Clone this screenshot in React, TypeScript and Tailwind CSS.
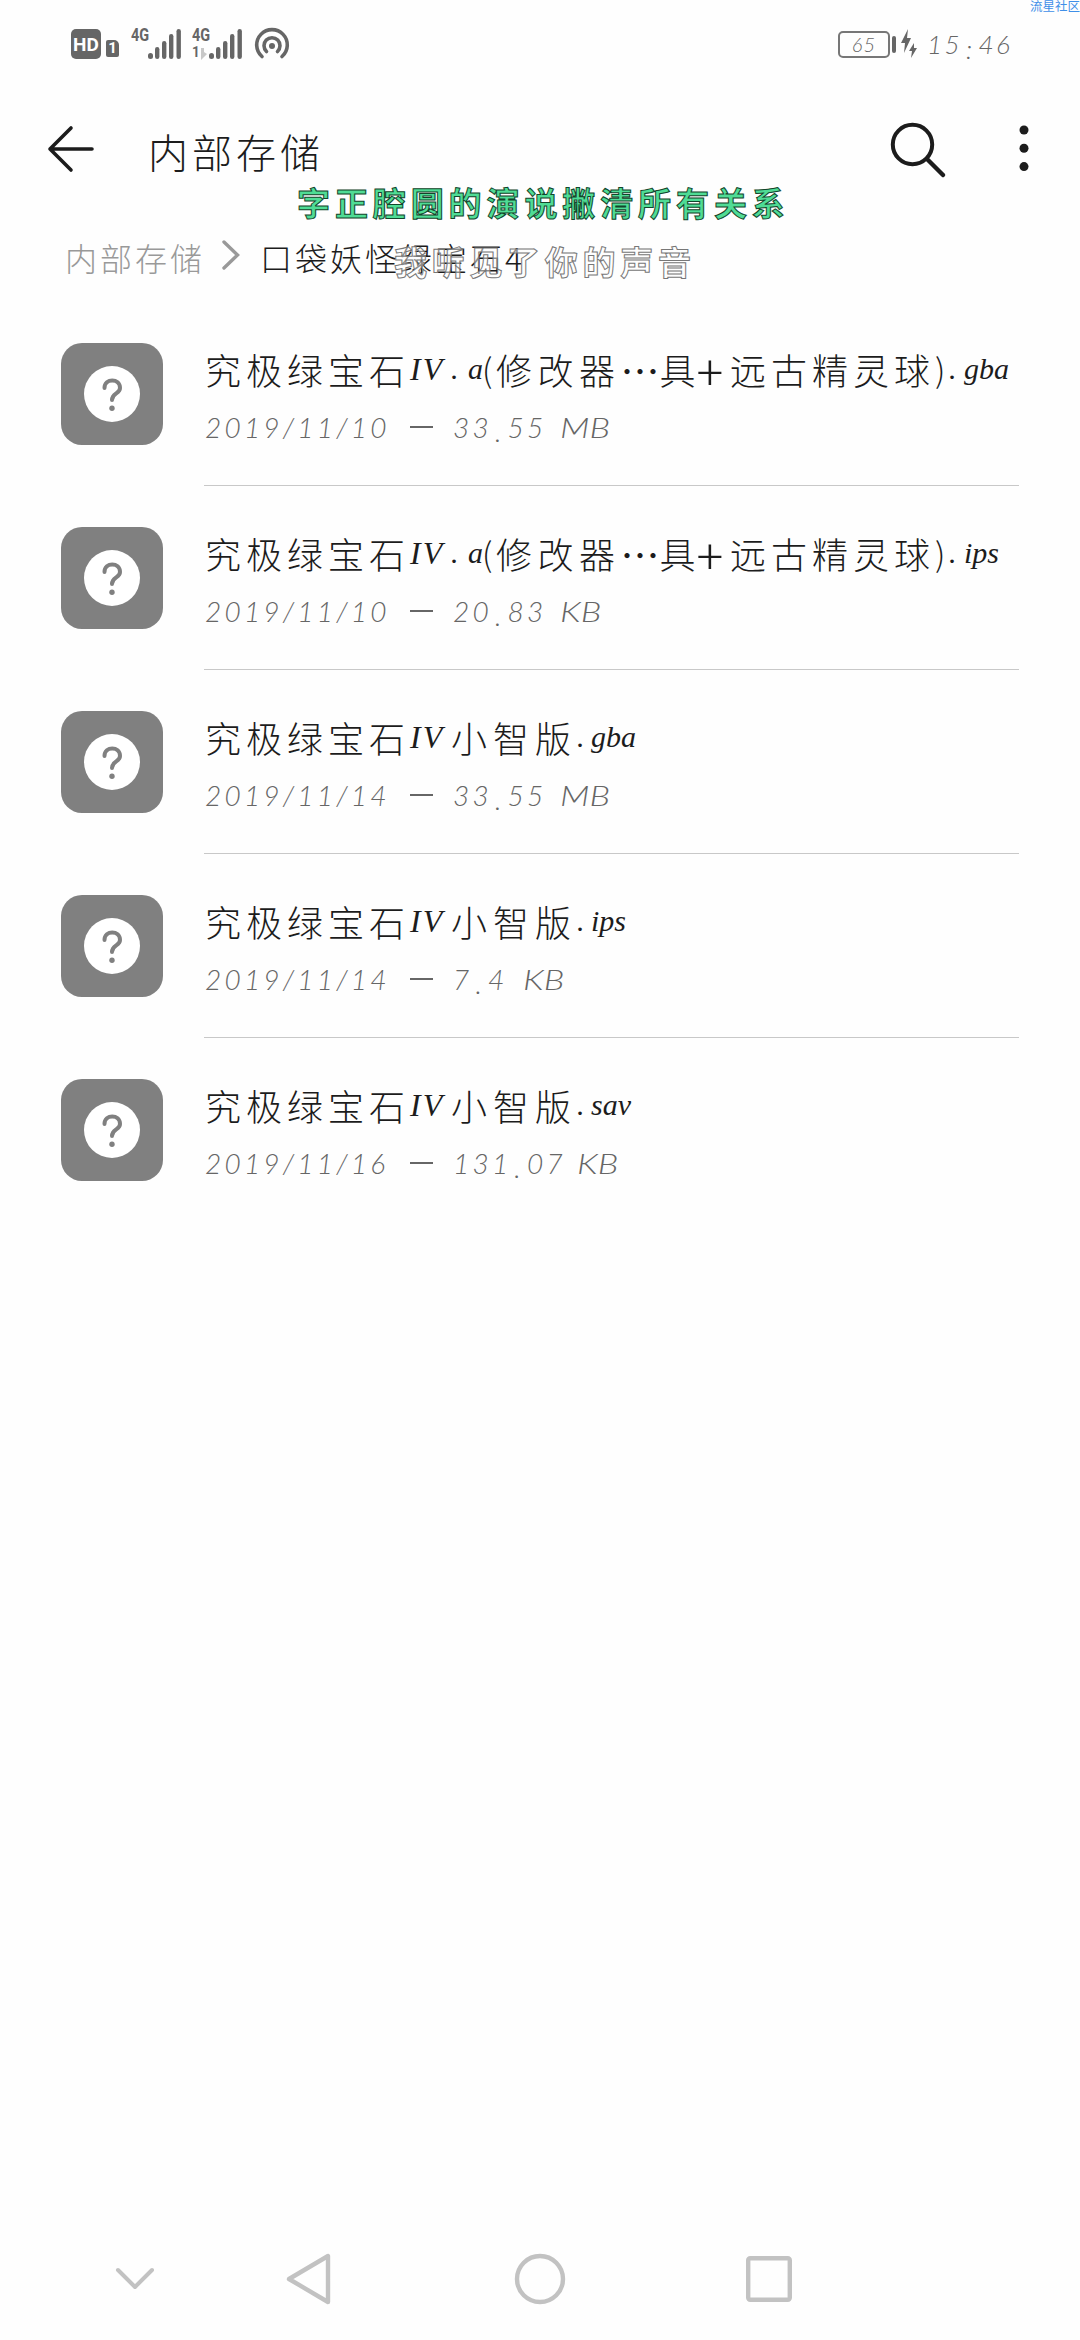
import React from "react";

type Part = { t: string; w: number; k: "cjk" | "latin" | "paren" | "iv" | "dots" | "plus" };

const kinds = {
  cjk: "font-['Noto_Sans_CJK_SC',sans-serif] font-light text-[36px]",
  latin: "font-['Liberation_Serif','Noto_Sans_CJK_SC',serif] italic text-[30px]",
  paren: "font-['Noto_Sans_CJK_SC',sans-serif] font-light text-[33px]",
  iv: "font-['Liberation_Serif','Noto_Sans_CJK_SC',serif] italic text-[32px] tracking-[2px]",
  dots: "font-['Noto_Sans_CJK_SC',sans-serif] text-[39px]",
  plus: "font-['Noto_Sans_CJK_SC',sans-serif] font-light text-[50px]",
};

const head: Part[] = [
  { t: "究极绿宝石", w: 205, k: "cjk" },
  { t: "IV", w: 41, k: "iv" },
];
const long: Part[] = [
  ...head,
  { t: ".", w: 17, k: "latin" },
  { t: "a", w: 14, k: "latin" },
  { t: "(", w: 14, k: "paren" },
  { t: "修改器", w: 124.5, k: "cjk" },
  { t: "…", w: 39, k: "dots" },
  { t: "具", w: 37, k: "cjk" },
  { t: "+", w: 33.5, k: "plus" },
  { t: "远古精灵球", w: 205, k: "cjk" },
  { t: ")", w: 14, k: "paren" },
  { t: ".", w: 15, k: "latin" },
];
const short: Part[] = [
  ...head,
  { t: "小智版", w: 126, k: "cjk" },
  { t: ".", w: 14, k: "latin" },
];

const files = [
  { parts: long, ext: "gba", date: "2019/11/10", size: "33.55", sizeW: 107, unit: "MB" },
  { parts: long, ext: "ips", date: "2019/11/10", size: "20.83", sizeW: 107, unit: "KB" },
  { parts: short, ext: "gba", date: "2019/11/14", size: "33.55", sizeW: 107, unit: "MB" },
  { parts: short, ext: "ips", date: "2019/11/14", size: "7.4", sizeW: 70, unit: "KB" },
  { parts: short, ext: "sav", date: "2019/11/16", size: "131.07", sizeW: 124, unit: "KB" },
];

function Signal() {
  return (
    <>
      <rect x="0" y="25" width="5" height="6" rx="2.5" />
      <rect x="7" y="19" width="4.4" height="12" rx="2.2" />
      <rect x="14" y="13" width="4.4" height="18" rx="2.2" />
      <rect x="21" y="6" width="4.4" height="25" rx="2.2" />
      <rect x="28.5" y="1" width="4.4" height="30" rx="2.2" />
    </>
  );
}

function StatusBar() {
  return (
    <div className="flex h-[88px] items-center pl-[71px] pr-[70px] text-[#666]">
      <div className="flex h-[30px] w-[30px] items-center justify-center rounded-[5px] bg-[#666] font-['Roboto',sans-serif] text-[19px] font-bold leading-none text-white">HD</div>
      <div className="ml-[5px] mt-[9px] flex h-[17px] w-[13px] items-center justify-center rounded-[2px] rounded-tr-[5px] bg-[#666] font-['Roboto',sans-serif] text-[15px] font-bold leading-none text-white">1</div>
      <div className="relative ml-[12px] h-[34px] w-[50px]">
        <span className="absolute -top-[2px] left-0 origin-left scale-x-[0.76] font-['Roboto',sans-serif] text-[19px] font-bold leading-none">4G</span>
        <svg className="absolute left-[17px] top-[1px]" width="34" height="32" fill="currentColor"><Signal /></svg>
      </div>
      <div className="relative ml-[11px] h-[34px] w-[50px]">
        <span className="absolute -top-[2px] left-0 origin-left scale-x-[0.76] font-['Roboto',sans-serif] text-[19px] font-bold leading-none">4G</span>
        <span className="absolute left-0 top-[18px] origin-left scale-x-90 font-['Roboto',sans-serif] text-[15px] font-bold leading-none">1</span>
        <svg className="absolute left-[9px] top-[21px]" width="7" height="12"><path d="M0 0V12L3 9V0ZM3 4L6 6L3 9Z" fill="#c8c8c8" /></svg>
        <svg className="absolute left-[17px] top-[1px]" width="34" height="32" fill="currentColor"><Signal /></svg>
      </div>
      <svg className="ml-[12px]" width="36" height="34" viewBox="0 0 36 34" fill="none" stroke="currentColor" strokeWidth="3.6" strokeLinecap="round">
        <circle cx="18" cy="19" r="3" fill="currentColor" stroke="none" />
        <path d="M12.5 24.5A8 8 0 1 1 23.5 24.5" />
        <path d="M8 29.5A15.3 15.3 0 1 1 28 29.5" />
      </svg>
      <div className="ml-auto flex items-center">
        <div className="flex h-[27px] w-[52px] items-center justify-center rounded-[5px] border-2 border-[#777] font-['Lato',sans-serif] text-[20px] font-light italic leading-none tracking-[1px]">65</div>
        <div className="ml-[2px] h-[17px] w-[4px] rounded-[2px] bg-[#666]" />
        <svg className="ml-[4px]" width="19" height="30" fill="currentColor">
          <path d="M8 0L1 14H5L4 24L11 9H7ZM14 14L9 22H12L11 29L17 19H14Z" />
        </svg>
        <div className="ml-[8px] w-[83px] whitespace-nowrap font-['Lato',sans-serif] text-[26px] font-light italic leading-none tracking-[2.4px]">
          15<span className="relative top-[5px] mx-[4px]">:</span>46
        </div>
      </div>
    </div>
  );
}

function FileRow({ f, last }: { f: (typeof files)[number]; last: boolean }) {
  return (
    <div className="flex h-[184px] pl-[61px]">
      <div className="mt-[41px] flex h-[102px] w-[102px] items-center justify-center rounded-[21px] bg-[#808080]">
        <svg width="56" height="56" viewBox="0 0 56 56" fill="none">
          <circle cx="28" cy="28" r="28" fill="#fff" />
          <path d="M20.5 22C20.5 12 36 12 36 22C36 28 28 27 28 34" stroke="#808080" strokeWidth="4" strokeLinecap="round" />
          <circle cx="28" cy="42.2" r="2.7" fill="#808080" />
        </svg>
      </div>
      <div className={`ml-[41px] flex w-[815px] flex-col border-b-[1.5px] pt-[40px] ${last ? "border-transparent" : "border-[#c8c8c8]"}`}>
        <div className="flex h-[54px] items-center whitespace-nowrap pl-[1px] leading-none text-[#1c1c1c]">
          {f.parts.map((p, i) => (
            <span
              key={i}
              className={`shrink-0 leading-none ${kinds[p.k]}`}
              style={{ width: p.w, letterSpacing: p.k === "cjk" && p.t.length > 1 ? p.w / p.t.length - 36 : undefined }}
            >
              {p.t}
            </span>
          ))}
          <span className="font-['Liberation_Serif',serif] text-[30px] italic leading-none">{f.ext}</span>
        </div>
        <div className="mt-[14px] flex h-[34px] items-center whitespace-nowrap pl-[1px] font-['Lato',sans-serif] text-[28px] font-light italic leading-none tracking-[3.2px] text-[#666]">
          <span className="w-[205px]">{f.date}</span>
          <span className="mr-[20px] h-[2px] w-[23px] bg-[#666]" />
          <span className="shrink-0" style={{ width: f.sizeW }}>
            {f.size.split(".")[0]}
            <span className="relative top-[4px] mx-[3px]">.</span>
            {f.size.split(".")[1]}
          </span>
          <span className="origin-left scale-x-[1.25] tracking-normal">{f.unit}</span>
        </div>
      </div>
    </div>
  );
}

export default function App() {
  return (
    <div className="relative flex h-[2340px] w-[1080px] flex-col overflow-hidden bg-[#fefefe]">
      <StatusBar />
      <div className="flex h-[124px] pl-[47px]">
        <svg className="mt-[36px]" width="48" height="50" fill="none" stroke="#1c1c1c" strokeWidth="3.6" strokeLinecap="round" strokeLinejoin="round">
          <path d="M45 25H3M24 4L3 25L24 46" />
        </svg>
        <h1 className="ml-[53px] mt-[43px] font-['Noto_Sans_CJK_SC',sans-serif] text-[40px] font-light leading-none tracking-[4px] text-[#1c1c1c]">内部存储</h1>
        <svg className="ml-auto mr-[72px] mt-[33px]" width="58" height="58" fill="none" stroke="#1c1c1c" strokeLinecap="round">
          <circle cx="23.5" cy="23.5" r="19.7" strokeWidth="4" />
          <path d="M38 38L54 54" strokeWidth="4.5" />
        </svg>
        <svg className="mr-[51px] mt-[36px]" width="10" height="48" fill="#1c1c1c">
          <circle cx="5" cy="6" r="4.5" />
          <circle cx="5" cy="24.3" r="4.5" />
          <circle cx="5" cy="42.6" r="4.5" />
        </svg>
      </div>
      <div className="flex h-[90px] items-center pl-[65px] font-['Noto_Sans_CJK_SC',sans-serif] text-[32px] font-light leading-none tracking-[3px]">
        <span className="w-[155px] whitespace-nowrap text-[#999]">内部存储</span>
        <svg className="mb-[4px]" width="22" height="34" fill="none" stroke="#999" strokeWidth="3.4" strokeLinecap="round">
          <path d="M4 4L17.5 17L4 30" />
        </svg>
        <span className="ml-[18px] whitespace-nowrap text-[#1c1c1c]">口袋妖怪绿宝石4</span>
      </div>

      <main className="flex grow flex-col">
        {files.map((f, i) => (
          <FileRow key={i} f={f} last={i === files.length - 1} />
        ))}
      </main>

      <nav className="flex h-[122px] items-center pl-[114px]">
        <svg width="42" height="26" fill="none" stroke="#c2c2c2" strokeWidth="4" strokeLinecap="round" strokeLinejoin="round">
          <path d="M4 4L21 21L38 4" />
        </svg>
        <svg className="ml-[130px]" width="46" height="52" fill="none" stroke="#c2c2c2" strokeWidth="4.4" strokeLinejoin="round">
          <path d="M42 3V49L3 26Z" />
        </svg>
        <svg className="ml-[182px]" width="52" height="52" fill="none" stroke="#c2c2c2" strokeWidth="4.4">
          <circle cx="26" cy="26" r="23" />
        </svg>
        <svg className="ml-[180px]" width="46" height="46" fill="none" stroke="#c2c2c2" strokeWidth="4.4">
          <rect x="2.2" y="2.2" width="41.6" height="41.6" rx="2" />
        </svg>
      </nav>

      <div className="absolute left-[297px] top-[186px] whitespace-nowrap font-['Noto_Sans_CJK_SC',sans-serif] text-[33px] font-bold leading-none tracking-[4.9px] text-[#4fdc95] [-webkit-text-stroke:1px_#12452b]">字正腔圆的演说撇清所有关系</div>
      <div className="absolute left-[394px] top-[245px] whitespace-nowrap font-['Noto_Sans_CJK_SC',sans-serif] text-[33px] font-bold leading-none tracking-[4.7px] text-white/50 [-webkit-text-stroke:1px_#777]">我听见了你的声音</div>
      <div className="absolute right-0 top-0 whitespace-nowrap font-['Noto_Sans_CJK_SC',sans-serif] text-[12.5px] leading-none text-[#3f8fe8]">流星社区</div>
    </div>
  );
}
